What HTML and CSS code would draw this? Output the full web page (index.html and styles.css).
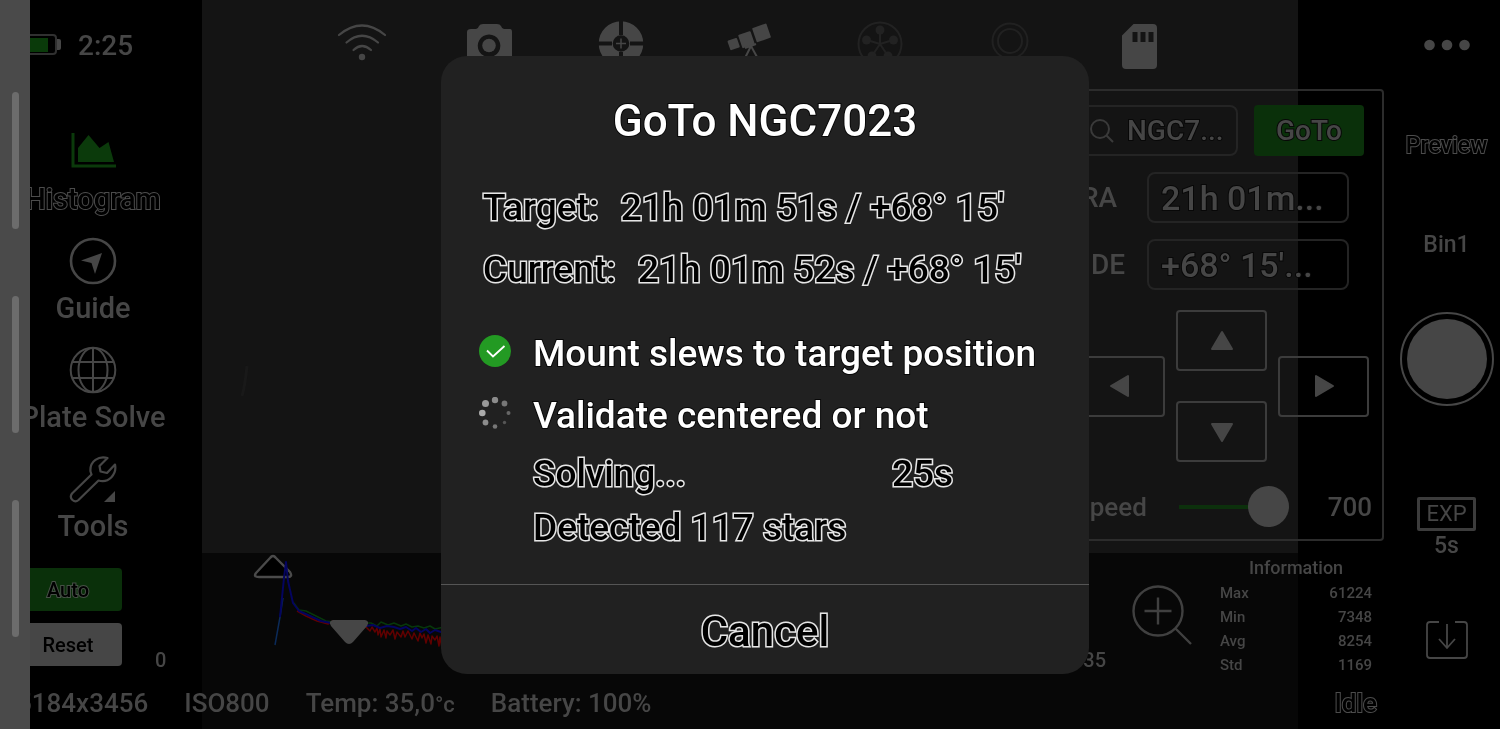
FILE: index.html
```html
<!DOCTYPE html>
<html lang="en">
<head>
<meta charset="utf-8">
<title>GoTo NGC7023</title>
<link rel="stylesheet" href="styles.css">
</head>
<body>
<div class="app">
  <div class="sky"><svg class="streak" width="10" height="34" viewBox="0 0 10 34"><path d="M7 2C6 12 5 22 2 32" fill="none" stroke="#191919" stroke-width="3"/></svg></div>

  <main class="workspace">
    <section class="stage">
      <aside class="sidebar">
        <div class="clock">
          <svg width="46" height="22" viewBox="0 0 46 22"><rect x="1" y="1" width="40" height="19" rx="3" fill="none" stroke="#303030" stroke-width="2"/><rect x="4" y="4" width="29" height="14" fill="#0a3a0a"/><path d="M42 5h2q2 0 2 2v7q0 2-2 2h-2z" fill="#464646"/></svg>
          <time>2:25</time>
        </div>
        <nav class="nav">
          <a class="nav-item nav-active" href="#histogram">
            <svg width="48" height="48" viewBox="0 0 48 48"><path d="M4 5v33h43" fill="none" stroke="#0b3a0b" stroke-width="3"/><path d="M9 34V20L19.500 7L30.500 20L39.500 14L45 34z" fill="#0b3a0b"/></svg>
            <span class="hollow">Histogram</span>
          </a>
          <a class="nav-item" href="#guide">
            <svg width="48" height="48" viewBox="0 0 48 48"><circle cx="24" cy="24" r="22" fill="none" stroke="#464646" stroke-width="2.600"/><path d="M33 16L12 23.500L22.500 26L26 37z" fill="#464646"/></svg>
            <span>Guide</span>
          </a>
          <a class="nav-item" href="#plate-solve">
            <svg width="48" height="48" viewBox="0 0 48 48"><g fill="none" stroke="#464646" stroke-width="2"><circle cx="24" cy="24" r="22.300"/><ellipse cx="24" cy="24" rx="14.500" ry="22"/><path d="M24 2v44M3.500 16h41M3.500 32h41"/></g></svg>
            <span>Plate Solve</span>
          </a>
          <a class="nav-item" href="#tools">
            <svg width="48" height="48" viewBox="0 0 48 48"><path d="M38.500 3C30 .500 20.500 6 21.500 16.500L22.500 19.500L3 38.500C-.500 43.500 5.500 48.500 9.500 45L29.500 25.500C40 28.500 48 19 46 9.500L38 18L31.500 16.500L30.500 11z" fill="none" stroke="#464646" stroke-width="2.200" stroke-linejoin="round"/><path d="M46 36v11H35z" fill="#464646"/></svg>
            <span>Tools</span>
          </a>
        </nav>
      </aside>

      <div class="view">
        <header class="devices">
          <svg width="50" height="50" viewBox="0 0 50 50"><g fill="none" stroke="#464646" stroke-width="2.200" stroke-linecap="round"><path d="M2 15Q25-4 48 15"/><path d="M9.500 22.500Q25 9 41 22.500"/><path d="M16.500 30Q25 22 34 30"/></g><circle cx="25" cy="37" r="3.200" fill="#464646"/></svg>
          <svg width="50" height="50" viewBox="0 0 50 50"><path fill-rule="evenodd" d="M5 9h5q2 0 3-3q1-2 4-2h14q3 0 4 2q1 3 3 3h6q2 0 2 3v33H1V12q0-3 4-3zM23 14.500a11.300 11.300 0 1 0 .1 0z" fill="#464646"/><circle cx="23" cy="25.500" r="6.800" fill="#464646"/></svg>
          <svg width="50" height="50" viewBox="0 0 50 50"><circle cx="25" cy="23.500" r="15.300" fill="none" stroke="#464646" stroke-width="14"/><path d="M25 0v15M25 32v15M2 23.500h14M34 23.500h14" stroke="#141414" stroke-width="4"/><path d="M25 18.500v10M20 23.500h10" stroke="#464646" stroke-width="1.500"/></svg>
          <svg width="50" height="50" viewBox="0 0 50 50"><g fill="#464646" transform="translate(3 26) rotate(-19)"><rect x="1" y="-5" width="10" height="10" rx="1"/><rect x="13" y="-7" width="13" height="14" rx="1"/><rect x="28.500" y="-9" width="15" height="15" rx="1"/></g><path d="M20 28l11-4M26 26l-6 12M26 26l6 11" stroke="#464646" stroke-width="2" fill="none"/></svg>
          <svg width="50" height="50" viewBox="0 0 50 50"><circle cx="25" cy="24" r="21.500" fill="none" stroke="#222" stroke-width="2"/><path d="M25 24V10M25 24L12 20M25 24L38 20M25 24L17 36M25 24L33 36" stroke="#222" stroke-width="2"/><g fill="#222"><circle cx="25" cy="10" r="4.500"/><circle cx="11.500" cy="20" r="4.500"/><circle cx="38.500" cy="20" r="4.500"/><circle cx="17" cy="36" r="4.500"/><circle cx="33" cy="36" r="4.500"/></g></svg>
          <svg width="50" height="50" viewBox="0 0 50 50"><g fill="none" stroke="#212121" stroke-width="2"><circle cx="25" cy="21" r="17.500"/><circle cx="25" cy="21" r="12"/></g></svg>
          <svg width="50" height="50" viewBox="0 0 50 50"><path fill-rule="evenodd" d="M19.500 4H39q4 0 4 4v37q0 4-4 4H12q-4 0-4-4V15.500zM18.500 12v10h5V12zM26.500 12v10h5V12zM34.500 12v10h5V12z" fill="#464646"/></svg>
        </header>

        <form class="mount">
          <div class="search-row">
            <label class="search">
              <svg width="26" height="26" viewBox="0 0 26 26"><circle cx="11" cy="11" r="9" fill="none" stroke="#3a3a3a" stroke-width="2"/><path d="M17.500 17.500L24 24" stroke="#3a3a3a" stroke-width="2"/></svg>
              <input class="search-text edged" type="text" value="NGC7..." aria-label="Object">
            </label>
            <button class="goto edged" type="button">GoTo</button>
          </div>
          <div class="coord coord-ra"><label for="ra">RA</label><input class="edged" id="ra" type="text" value="21h 01m..."></div>
          <div class="coord"><label for="de">DE</label><input class="edged" id="de" type="text" value="+68° 15'..."></div>
          <div class="pad">
            <button type="button" aria-label="Left"><svg width="24" height="24" viewBox="0 0 24 24"><path d="M20 2v20L3 12z"/></svg></button>
            <div class="pad-middle">
              <button type="button" aria-label="Up"><svg width="24" height="24" viewBox="0 0 24 24"><path d="M2 20h20L12 3z"/></svg></button>
              <button type="button" aria-label="Down"><svg width="24" height="24" viewBox="0 0 24 24"><path d="M2 4h20L12 21z"/></svg></button>
            </div>
            <button type="button" aria-label="Right"><svg width="24" height="24" viewBox="0 0 24 24"><path d="M4 2v20L21 12z"/></svg></button>
          </div>
          <div class="speed">
            <label for="speed">Speed</label>
            <input id="speed" type="range" min="0" max="700" value="700">
            <output for="speed">700</output>
          </div>
        </form>
      </div>
    </section>

    <section class="histogram">
      <div class="histogram-actions">
        <button class="auto" type="button">Auto</button>
        <button class="reset" type="button">Reset</button>
      </div>
      <span class="bound">0</span>
      <svg class="chart" width="400" height="131">
        <path d="M80 20L94 5Q97 1 100 5L114 19Q117 24 112 24H83Q77 24 80 20z" fill="#000" stroke="#4a4a4a" stroke-width="2.400" stroke-linejoin="round"/>
        <g fill="none" stroke-linejoin="round">
          <path d="M121 58L130 63L141 68L152 71L157 68L175 69L190 74L194 78L196 74L199 79L201 75L202 82L204 76L205 84L208 77L210 85L211 78L214 82L217 77L219 86L221 79L225 84L227 78L229 84L232 78L236 86L238 80L242 88L244 80L246 85L248 81L250 90L252 82L255 91L256 83L259 87L261 83L263 93L264 84L266 95L268 84L290 92" stroke="#600000" stroke-width="1.500"/>
          <path d="M117 49L123 57L130 58L138 62L150 68L165 70L180 70L195 70L201 73L205 69L212 72L218 70L225 73L230 71L236 74L242 73L248 75L254 73L259 76L268 74L290 79" stroke="#07370b" stroke-width="1.500"/>
          <path d="M99 92L104 64L107 45" stroke="#0b2a58" stroke-width="1.500"/>
          <path d="M104 64L108 25L110 9L112 28L117 50L123 58L134 63L145 68L160 71L190 73L197 72L204 75L211 73L218 74L224 76L230 74L236 78L240 75L245 79L250 76L254 80L259 77L268 80L290 86" stroke="#04045f" stroke-width="2"/>
        </g>
        <path d="M157 67H189Q194 68 191 73L177 89Q173 93 169 89L155 73Q152 68 157 67z" fill="#464646"/>
      </svg>
      <span class="bound">65535</span>
      <button class="zoom" type="button" aria-label="Zoom"><svg width="60" height="60" viewBox="0 0 60 60"><g fill="none" stroke="#404040" stroke-width="2.400"><circle cx="26" cy="26" r="24.500"/><path d="M26 12.500v27M12.500 26h27M43.500 43.500L59 59"/></g></svg></button>
      <table class="info">
        <caption>Information</caption>
        <tr><th>Max</th><td>61224</td></tr>
        <tr><th>Min</th><td>7348</td></tr>
        <tr><th>Avg</th><td>8254</td></tr>
        <tr><th>Std</th><td>1169</td></tr>
      </table>
    </section>

    <footer class="status">
      <span class="resolution">5184x3456</span>
      <span>ISO800</span>
      <span>Temp: 35,0<small>°c</small></span>
      <span>Battery: 100%</span>
      <span class="state hollow">Idle</span>
    </footer>
  </main>

  <aside class="rail">
    <button class="more" type="button" aria-label="More"><svg width="48" height="12" viewBox="0 0 48 12"><g fill="#464646"><circle cx="6.500" cy="6" r="5.300"/><circle cx="24" cy="6" r="5.300"/><circle cx="41.500" cy="6" r="5.300"/></g></svg></button>
    <button class="mode hollow" type="button">Preview</button>
    <button class="bin" type="button">Bin1</button>
    <button class="shutter" type="button" aria-label="Capture"></button>
    <button class="exposure" type="button"><span class="exp">EXP</span><span>5s</span></button>
    <button class="save" type="button" aria-label="Save"><svg width="42" height="40" viewBox="0 0 42 40"><path d="M13 2H4Q1 2 1 5V35Q1 38 4 38H38Q41 38 41 35V5Q41 2 38 2H29M21 4v23M13 19l8 9l8-9" fill="none" stroke="#464646" stroke-width="1.800"/></svg></button>
  </aside>

  <div class="edge"><i></i><i></i><i></i></div>

  <div class="overlay">
    <dialog class="dialog" open aria-labelledby="dialog-title">
      <h1 class="edged" id="dialog-title">GoTo NGC7023</h1>
      <dl class="position hollow">
        <div><dt>Target:</dt><dd>21h 01m 51s / +68° 15'</dd></div>
        <div><dt>Current:</dt><dd>21h 01m 52s / +68° 15'</dd></div>
      </dl>
      <ul class="steps">
        <li class="edged"><svg width="32" height="38" viewBox="0 0 32 38"><circle cx="16" cy="16" r="16" fill="#239a23"/><path d="M8 15.500l6 6L25.500 11" fill="none" stroke="#fff" stroke-width="1.800"/></svg>Mount slews to target position</li>
        <li class="edged"><svg width="32" height="38" viewBox="0 0 32 38"><g fill="#8c8c8c"><circle cx="16" cy="3" r="3.200"/><circle cx="6.500" cy="6.500" r="3.500" fill="#999"/><circle cx="3.300" cy="16" r="3.300" fill="#aaa"/><circle cx="6.500" cy="25.500" r="2.900"/><circle cx="16" cy="29.500" r="2.300" fill="#777"/><circle cx="25.500" cy="25.500" r="1.700" fill="#555"/><circle cx="29.500" cy="16" r="2" fill="#666"/><circle cx="25.500" cy="6.500" r="2.900" fill="#777"/></g></svg>Validate centered or not</li>
      </ul>
      <div class="progress hollow">
        <p><span>Solving...</span><span>25s</span></p>
        <p>Detected 117 stars</p>
      </div>
      <button class="cancel hollow" type="button">Cancel</button>
    </dialog>
  </div>
</div>
</body>
</html>
```
FILE: styles.css
```css
* { box-sizing: border-box; }

body {
  margin: 0;
  background: #000;
  color: #464646;
  font-family: Roboto, "Noto Sans", sans-serif;
  font-weight: 500;
}

button, input {
  margin: 0;
  padding: 0;
  border: 0;
  background: none;
  color: inherit;
  font: inherit;
}

svg { display: block; flex: none; }

.hollow {
  color: #000;
  -webkit-text-stroke: 2px #4c4c4c;
  paint-order: stroke fill;
}

.edged {
  -webkit-text-stroke: 2px #080808;
  paint-order: stroke fill;
}

.app {
  position: relative;
  display: grid;
  grid-template-columns: minmax(0, 1fr) 107px;
  min-height: 100vh;
  overflow: hidden;
  isolation: isolate;
  will-change: transform;
}

.sky {
  position: absolute;
  inset: 0 202px;
  z-index: -1;
  background: #141414;
}

.streak {
  position: absolute;
  left: 38px;
  top: 364px;
}

.workspace {
  display: flex;
  flex-direction: column;
}

.stage {
  display: flex;
  flex: 1;
}

/* Left navigation */
.sidebar { width: 186px; }

.clock {
  display: flex;
  align-items: center;
  gap: 17px;
  height: 90px;
  padding-left: 15px;
  font-size: 28px;
}

.nav {
  display: grid;
  gap: 20px;
  margin-top: 38px;
}

.nav-item {
  display: flex;
  flex-direction: column;
  align-items: center;
  gap: 5px;
  color: #464646;
  font-size: 29px;
  line-height: 36px;
  text-decoration: none;
  white-space: nowrap;
}

/* Device bar and mount control */
.view {
  display: flex;
  flex: 1;
  flex-direction: column;
  align-items: flex-end;
}

.devices {
  display: grid;
  grid-template-columns: repeat(7, 1fr);
  justify-items: center;
  align-self: stretch;
  padding: 20px 189px 19px 111px;
}

.mount {
  width: 334px;
  margin-right: 9px;
  padding: 14px 0 12px 22px;
  border: 2px solid #2c2c2c;
  border-radius: 4px;
}

.search-row {
  display: flex;
  gap: 16px;
}

.search {
  display: flex;
  align-items: center;
  gap: 12px;
  width: 164px;
  height: 51px;
  padding-left: 13px;
  border: 2px solid #242424;
  border-radius: 8px;
}

.search-text {
  width: 108px;
  font-size: 28px;
}

.goto {
  width: 110px;
  height: 51px;
  border-radius: 4px;
  background: #0a300a;
  font-size: 28px;
}

.coord {
  display: flex;
  align-items: center;
  justify-content: space-between;
  margin: 16px 33px 0 0;
  padding-left: 3px;
  font-size: 28px;
}

.coord label {
  width: 56px;
  padding-left: 14px;
}

.coord-ra label { padding-left: 4px; }

.coord input {
  width: 202px;
  height: 51px;
  padding-left: 12px;
  border: 2px solid #242424;
  border-radius: 8px;
  font-size: 34px;
}

.pad {
  display: flex;
  align-items: center;
  gap: 11px;
  margin-top: 20px;
}

.pad-middle {
  display: grid;
  gap: 30px;
}

.pad button {
  display: grid;
  place-items: center;
  width: 91px;
  height: 61px;
  border: 2px solid #3c3c3c;
  border-radius: 4px;
}

.pad path {
  fill: #464646;
  stroke: #464646;
  stroke-width: 2;
  stroke-linejoin: round;
}

.speed {
  display: flex;
  align-items: center;
  height: 41px;
  margin: 24px 10px 0 0;
  font-size: 26px;
}

.speed label {
  width: 68px;
  white-space: nowrap;
  text-align: right;
}

.speed input {
  width: 110px;
  height: 41px;
  margin: 0 auto 0 37px;
  appearance: none;
  background: linear-gradient(#0c300c, #0c300c) center / 100% 4px no-repeat;
}

.speed input::-webkit-slider-thumb {
  width: 41px;
  height: 41px;
  appearance: none;
  border-radius: 50%;
  background: #464646;
}

/* Histogram strip */
.histogram {
  display: flex;
  height: 131px;
  padding-right: 21px;
  background: rgba(0, 0, 0, 0.65);
}

.histogram-actions {
  display: grid;
  gap: 12px;
  align-content: start;
  width: 122px;
  padding: 15px 0 0 14px;
  font-size: 20px;
}

.histogram-actions button {
  height: 43px;
  border-radius: 4px;
}

.auto {
  background: #0a300a;
  color: #000;
  -webkit-text-stroke: 2px #465046;
  paint-order: stroke fill;
}

.reset {
  background: #464646;
  color: #000;
}

.bound {
  align-self: flex-end;
  margin-bottom: 12px;
  padding: 0 10px 0 33px;
  font-size: 20px;
  line-height: 24px;
}

.chart {
  flex: 1;
  min-width: 0;
}

.chart + .bound { padding: 0 26px 0 10px; }

.zoom {
  align-self: flex-start;
  margin-top: 32px;
}

.info {
  width: 152px;
  margin-left: 28px;
  align-self: flex-start;
  border-collapse: collapse;
  font-size: 15px;
  line-height: 24px;
}

.info caption {
  padding-top: 2px;
  font-size: 18px;
  line-height: 26px;
}

.info th, .info td {
  padding: 0;
  font-weight: 500;
  text-align: left;
}

.info td { text-align: right; }

.status {
  display: flex;
  gap: 36px;
  height: 45px;
  padding: 0 16px 0 17px;
  background: rgba(0, 0, 0, 0.65);
  font-size: 26px;
  line-height: 38px;
  white-space: nowrap;
}

.status small { font-size: 22px; }

.state { margin-left: auto; }

/* Capture rail */
.rail {
  display: flex;
  flex-direction: column;
  align-items: center;
  padding-top: 30px;
  font-size: 23px;
  line-height: 30px;
}

.more { height: 30px; }

.mode { margin-top: 71px; }

.bin { margin-top: 69px; }

.shutter {
  width: 94px;
  height: 94px;
  margin-top: 52px;
  border: 2px solid #464646;
  border-radius: 50%;
  padding: 5px;
  background: #464646 content-box;
}

.exposure {
  display: grid;
  justify-items: center;
  margin-top: 91px;
}

.exp {
  width: 59px;
  border: 3px solid #3c3c3c;
  border-radius: 2px;
  font-size: 22px;
  font-weight: 400;
  line-height: 28px;
}

.save { margin-top: 59px; }

/* System edge panel */
.edge {
  position: absolute;
  inset: 0 auto 0 0;
  display: flex;
  flex-direction: column;
  align-items: center;
  justify-content: center;
  gap: 67px;
  width: 30px;
  background: #4a4a4a;
}

.edge i {
  width: 7px;
  height: 137px;
  border-radius: 4px;
  background: #6c6c6c;
}

/* Dialog */
.overlay {
  position: absolute;
  inset: 0 0 0 30px;
  display: flex;
  align-items: center;
  justify-content: center;
}

.dialog {
  position: static;
  width: 648px;
  margin: 0;
  padding: 35px 0 0;
  border: 0;
  border-radius: 26px;
  background: #212121;
  color: #fff;
  font-size: 37px;
  overflow: hidden;
}

.dialog .hollow {
  color: #000;
  -webkit-text-stroke: 3px #e6e6e6;
}

.dialog h1 {
  margin: 0;
  font-size: 44px;
  font-weight: 500;
  line-height: 60px;
  text-align: center;
}

.position {
  margin: 26px 42px 0;
  line-height: 62px;
}

.position div {
  display: flex;
  gap: 22px;
}

.position dd { margin: 0; }

.steps {
  margin: 22px 38px 0;
  padding: 0;
  list-style: none;
  line-height: 62px;
}

.steps li {
  display: flex;
  align-items: center;
  gap: 22px;
}

.progress {
  padding: 0 136px 29px 92px;
  line-height: 54px;
}

.progress p {
  display: flex;
  justify-content: space-between;
  margin: 0;
}

.cancel {
  width: 100%;
  height: 90px;
  padding-top: 4px;
  border-top: 1px solid #555;
  font-size: 42px;
}
```
